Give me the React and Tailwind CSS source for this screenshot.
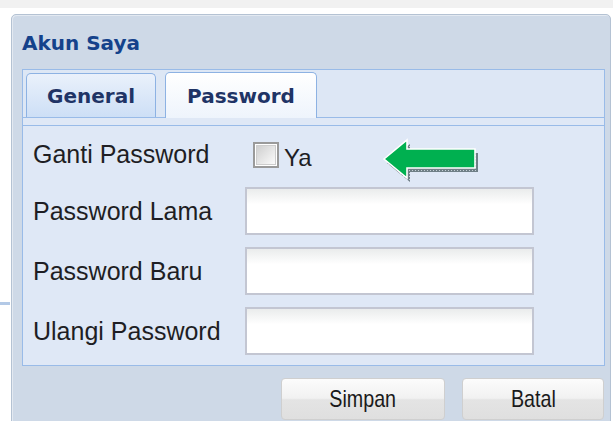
import React, { useState } from 'react';

const labelFont = "font-['Liberation_Sans',Arial,sans-serif]";
const boldFont = "font-['DejaVu_Sans',Tahoma,sans-serif]";
const btnFont = "font-['Liberation_Sans',Arial,sans-serif]";

function Field({ label, mt }) {
  return (
    <div className={`flex items-center ${mt}`}>
      <label className={`w-[212px] text-[25px] leading-none text-[#1e1e24] ${labelFont}`}>{label}</label>
      <input
        type="password"
        className="h-[48px] w-[289px] border-2 border-[#c3c6d2] bg-gradient-to-b from-[#eaecec] to-white to-[35%] outline-none"
      />
    </div>
  );
}

function Tab({ label, active, onClick }) {
  return (
    <button
      onClick={onClick}
      className={
        active
          ? `-mb-px h-[46px] w-[152px] rounded-t-[5px] border border-b-0 border-[#8db2e3] bg-gradient-to-b from-white to-[#eef4fc] text-[20px] font-bold text-[#1f3466] ${boldFont}`
          : `h-[44px] w-[130px] rounded-t-[5px] border border-b-0 border-[#8db2e3] bg-gradient-to-b from-[#eaf1fb] to-[#cddff6] text-[20px] font-bold text-[#1f3466] ${boldFont}`
      }
    >
      {label}
    </button>
  );
}

// green "look here" arrow with white rim and dotted drop shadow
function PointerArrow() {
  const pts = '5,23 28,4 28,13 96,13 96,32 28,32 28,42';
  return (
    <svg width="104" height="50" viewBox="0 0 104 50" className="absolute left-[356px] top-[10px]">
      <defs>
        <pattern id="dots" width="3" height="3" patternUnits="userSpaceOnUse">
          <rect width="3" height="3" fill="#6f7f86" />
          <rect width="1" height="1" fill="#c4d0d6" />
        </pattern>
      </defs>
      <polygon points={pts} transform="translate(3,4)" fill="url(#dots)" />
      <polygon points={pts} fill="#00b050" stroke="#ffffff" strokeWidth="1.6" strokeLinejoin="miter" />
    </svg>
  );
}

function FooterButton({ children, width }) {
  return (
    <button
      className={`${width} h-[42px] rounded-[4px] border border-[#cfcfcf] bg-[linear-gradient(#fcfcfc,#f1f1f1_48%,#e4e4e4_52%,#dfdfdf)] text-[24px] text-[#1a1a1a] ${btnFont}`}
    >
      {/* narrow face: squeeze the regular one */}
      <span className="inline-block scale-x-[0.82]">{children}</span>
    </button>
  );
}

export default function App() {
  const [tab, setTab] = useState('password');
  const [ganti, setGanti] = useState(false);

  return (
    <div className="relative h-[421px] w-[613px] overflow-hidden bg-white">
      <div className="h-[8px] bg-[#f1f1f1]" />
      <div className="h-[6px]" />
      <div className="absolute left-0 top-[302px] h-[3px] w-[10px] bg-[#b3c9e6]" />

      <div className="ml-[11px] h-[420px] w-[600px] rounded-t-[5px] border border-[#b4c2d3] bg-[#ced9e7] shadow-[inset_1px_1px_0_#e3e9f1]">
        <div className="h-[54px] pl-[10px] pt-[16px]">
          <h1 className={`text-[20px] font-bold leading-[24px] text-[#15428b] ${boldFont}`}>Akun Saya</h1>
        </div>

        <div className="ml-[10px] mr-[5px]">
          <div className="flex h-[49px] items-end gap-[9px] border border-[#99bbe8] bg-[#dde7f5] px-[3px]">
            <Tab label="General" active={tab === 'general'} onClick={() => setTab('general')} />
            <Tab label="Password" active={tab === 'password'} onClick={() => setTab('password')} />
          </div>
          <div className="h-[7px] border-x border-[#99bbe8] bg-[#dfe8f6]" />

          <div className="relative h-[241px] border border-[#99bbe8] bg-[#dfe8f6] pl-[10px] pt-[10px]">
            <div className="flex h-[37px] items-center">
              <span className={`w-[212px] text-[25px] leading-none text-[#1e1e24] ${labelFont}`}>Ganti Password</span>
              <label className="ml-[8px] flex cursor-pointer items-center gap-[5px]">
                <span
                  onClick={() => setGanti(!ganti)}
                  className="flex h-[26px] w-[26px] items-center justify-center border-2 border-[#9a9a9a] bg-white"
                >
                  <span className="h-[20px] w-[20px] border border-[#cdcdcd] bg-gradient-to-br from-[#cfcfcf] to-[#fbfbfb] text-center text-[14px] leading-[18px]">
                    {ganti ? '✓' : ''}
                  </span>
                </span>
                <span className={`mt-[6px] text-[24px] leading-none text-[#1e1e24] ${labelFont}`}>Ya</span>
              </label>
            </div>
            <PointerArrow />

            <Field label="Password Lama" mt="mt-[14px]" />
            <Field label="Password Baru" mt="mt-[12px]" />
            <Field label="Ulangi Password" mt="mt-[12px]" />
          </div>
        </div>

        <div className="mt-[12px] flex justify-end gap-[17px] pr-[6px]">
          <FooterButton width="w-[164px]">Simpan</FooterButton>
          <FooterButton width="w-[142px]">Batal</FooterButton>
        </div>
      </div>
    </div>
  );
}
